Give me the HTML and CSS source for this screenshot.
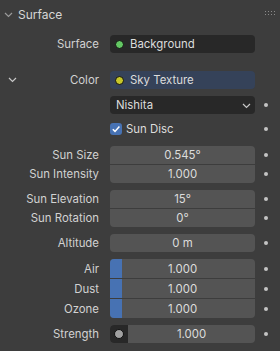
FILE: index.html
```html
<!DOCTYPE html>
<html>
<head>
<meta charset="utf-8">
<link rel="stylesheet" href="styles.css">
</head>
<body>
<div class="panel">
  <div class="header">
    <svg class="hchev" width="9" height="6" viewBox="0 0 9 6"><path d="M1 1 L4.5 4.5 L8 1" fill="none" stroke="#9a9a9a" stroke-width="1.2"/></svg>
    <span class="htitle">Surface</span>
    <svg class="grip" width="11" height="5" viewBox="0 0 11 5"><g fill="#8a8a8a"><rect x="0" y="0" width="1" height="1"/><rect x="3" y="0" width="1" height="1"/><rect x="6" y="0" width="1" height="1"/><rect x="9" y="0" width="1" height="1"/><rect x="0" y="3" width="1" height="1"/><rect x="3" y="3" width="1" height="1"/><rect x="6" y="3" width="1" height="1"/><rect x="9" y="3" width="1" height="1"/></g></svg>
  </div>

  <div class="row r-surface">
    <div class="label">Surface</div>
    <div class="field dark"><span class="sock green"></span><span>Background</span></div>
    <div class="dotcol"></div>
  </div>

  <div class="row r-color">
    <div class="label"><svg class="lchev" width="9" height="6" viewBox="0 0 9 6"><path d="M1 1 L4.5 4.5 L8 1" fill="none" stroke="#c8c8c8" stroke-width="1.2"/></svg><span>Color</span></div>
    <div class="field blue"><span class="sock yellow"></span><span>Sky Texture</span></div>
    <div class="dotcol"></div>
  </div>

  <div class="row r-nishita">
    <div class="label"></div>
    <div class="field dark drop"><span>Nishita</span><svg class="dchev" width="9" height="6" viewBox="0 0 9 6"><path d="M1 1 L4.5 4.5 L8 1" fill="none" stroke="#c8c8c8" stroke-width="1.2"/></svg></div>
    <div class="dotcol"><span class="dot"></span></div>
  </div>

  <div class="row r-disc">
    <div class="label"></div>
    <div class="check"><span class="box"><svg width="10" height="10" viewBox="0 0 10 10"><path d="M1.8 5.2 L4 7.4 L8.4 2.4" fill="none" stroke="#fff" stroke-width="1.5"/></svg></span><span>Sun Disc</span></div>
    <div class="dotcol"><span class="dot"></span></div>
  </div>

  <div class="group g1">
    <div class="row"><div class="label">Sun Size</div><div class="field num top">0.545°</div><div class="dotcol"><span class="dot"></span></div></div>
    <div class="row"><div class="label">Sun Intensity</div><div class="field num bot">1.000</div><div class="dotcol"><span class="dot"></span></div></div>
  </div>

  <div class="group g2">
    <div class="row"><div class="label">Sun Elevation</div><div class="field num top">15°</div><div class="dotcol"><span class="dot"></span></div></div>
    <div class="row"><div class="label">Sun Rotation</div><div class="field num bot">0°</div><div class="dotcol"><span class="dot"></span></div></div>
  </div>

  <div class="row r-alt">
    <div class="label">Altitude</div>
    <div class="field num">0 m</div>
    <div class="dotcol"><span class="dot"></span></div>
  </div>

  <div class="group g3">
    <div class="row r19"><div class="label">Air</div><div class="field num slider top"><span class="fill"></span><span class="val">1.000</span></div><div class="dotcol"><span class="dot"></span></div></div>
    <div class="row r19"><div class="label">Dust</div><div class="field num slider mid"><span class="fill"></span><span class="val">1.000</span></div><div class="dotcol"><span class="dot"></span></div></div>
    <div class="row r19"><div class="label">Ozone</div><div class="field num slider bot"><span class="fill"></span><span class="val">1.000</span></div><div class="dotcol"><span class="dot"></span></div></div>
  </div>

  <div class="row r-strength">
    <div class="label">Strength</div>
    <div class="field split"><span class="sockbox"><span class="sock gray"></span></span><span class="numpart">1.000</span></div>
    <div class="dotcol"><span class="dot"></span></div>
  </div>
</div>
</body>
</html>
```

FILE: styles.css
```css
html, body {
  margin: 0;
  padding: 0;
  background: #3d3d3d;
}
.panel {
  width: 280px;
  height: 351px;
  background: #3d3d3d;
  font-family: Inter, "DejaVu Sans", sans-serif;
  font-size: 11.4px;
  color: #d0d0d0;
  overflow: hidden;
}
.header {
  height: 28px;
  display: flex;
  align-items: center;
  padding-left: 4px;
  box-sizing: border-box;
}
.hchev { margin-right: 5px; margin-top: 1px; }
.htitle { font-size: 12px; color: #d6d6d6; flex: 1; }
.grip { margin-right: 4px; margin-top: -2px; }

.row {
  display: grid;
  grid-template-columns: 110px 145px 25px;
  height: 18px;
  align-items: center;
}
.label {
  text-align: right;
  padding-right: 11px;
  color: #d2d2d2;
  white-space: nowrap;
  position: relative;
}
.lchev { position: absolute; left: 8px; top: 4px; }
.field {
  height: 18px;
  box-sizing: border-box;
  border-radius: 4px;
  display: flex;
  align-items: center;
  color: #dcdcdc;
}
.dark { background: #282828; }
.blue { background: #354259; }
.sock {
  width: 9px;
  height: 9px;
  border-radius: 50%;
  box-sizing: border-box;
  border: 1px solid #111;
  margin-left: 5px;
  margin-right: 6px;
  flex: none;
}
.green { background: #63c763; }
.yellow { background: #c7c729; }
.gray { background: #a1a1a1; border-color: #111; margin: 0; width: 10px; height: 10px; }

.drop { padding-left: 6px; justify-content: space-between; padding-right: 4px; }
.dchev { margin-top: 1px; }

.dotcol { display: flex; justify-content: center; align-items: center; }
.dot {
  width: 4px;
  height: 4px;
  border-radius: 50%;
  background: #c4c4c4;
  margin-left: -3px;
}

.r-surface { margin-top: 7px; }
.r-color { margin-top: 18px; }
.r-nishita { margin-top: 7px; }
.r-disc { margin-top: 7px; height: 15px; }
.check { display: flex; align-items: center; color: #dcdcdc; }
.box {
  width: 12px;
  height: 12px;
  border-radius: 3px;
  background: #4772b3;
  display: flex;
  align-items: center;
  justify-content: center;
  margin-right: 4px;
}
.box svg { display: block; }

.group { display: flex; flex-direction: column; gap: 1px; }
.g1 { margin-top: 10px; }
.g2 { margin-top: 7px; }
.r-alt { margin-top: 7px; }
.g3 { margin-top: 7px; }
.r19, .r19 .field { height: 19px; }
.r-strength { margin-top: 7px; }

.num {
  background: #545454;
  justify-content: center;
  position: relative;
  overflow: hidden;
}
.top { border-radius: 4px 4px 0 0; }
.mid { border-radius: 0; }
.bot { border-radius: 0 0 4px 4px; }
.slider .fill {
  position: absolute;
  left: 0;
  top: 0;
  bottom: 0;
  width: 12px;
  background: #4772b3;
}
.slider .val { position: relative; }

.split { background: #545454; overflow: hidden; }
.sockbox {
  width: 18px;
  height: 18px;
  background: #282828;
  display: flex;
  align-items: center;
  justify-content: center;
  flex: none;
}
.numpart { flex: 1; text-align: center; color: #dcdcdc; }
```
